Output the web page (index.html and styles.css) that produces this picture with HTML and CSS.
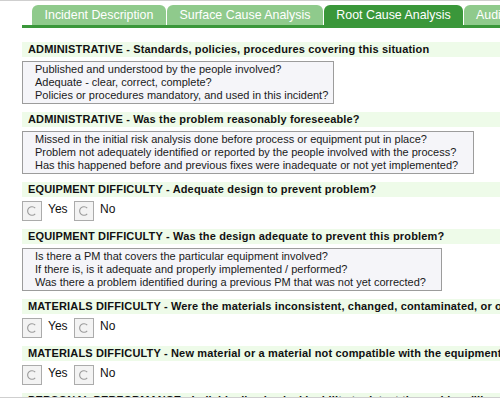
FILE: index.html
```html
<!DOCTYPE html>
<html>
<head>
<meta charset="utf-8">
<link rel="stylesheet" href="styles.css">
</head>
<body>
<div class="frame">
  <div class="tabs">
    <div class="tab tab-1">Incident Description</div>
    <div class="tab tab-2">Surface Cause Analysis</div>
    <div class="tab tab-3 active">Root Cause Analysis</div>
    <div class="tab tab-4">Audit</div>
  </div>
  <div class="bar"></div>
  <div class="content">
    <div class="q">
      <div class="qh">ADMINISTRATIVE - Standards, policies, procedures covering this situation</div>
      <div class="hint w1">Published and understood by the people involved?<br>Adequate - clear, correct, complete?<br>Policies or procedures mandatory, and used in this incident?</div>
    </div>
    <div class="q">
      <div class="qh">ADMINISTRATIVE - Was the problem reasonably foreseeable?</div>
      <div class="hint w2">Missed in the initial risk analysis done before process or equipment put in place?<br>Problem not adequately identified or reported by the people involved with the process?<br>Has this happened before and previous fixes were inadequate or not yet implemented?</div>
    </div>
    <div class="q">
      <div class="qh">EQUIPMENT DIFFICULTY - Adequate design to prevent problem?</div>
      <div class="radios">
        <label class="opt"><span class="rb"><svg width="18" height="18" viewBox="0 0 18 18"><path d="M12.2 6.2 A4.3 4.3 0 1 0 12.2 11.8" fill="none" stroke="#9a9a9a" stroke-width="1.1"/></svg></span><span class="lbl">Yes</span></label>
        <label class="opt"><span class="rb"><svg width="18" height="18" viewBox="0 0 18 18"><path d="M12.2 6.2 A4.3 4.3 0 1 0 12.2 11.8" fill="none" stroke="#9a9a9a" stroke-width="1.1"/></svg></span><span class="lbl">No</span></label>
      </div>
    </div>
    <div class="q">
      <div class="qh">EQUIPMENT DIFFICULTY - Was the design adequate to prevent this problem?</div>
      <div class="hint w3">Is there a PM that covers the particular equipment involved?<br>If there is, is it adequate and properly implemented / performed?<br>Was there a problem identified during a previous PM that was not yet corrected?</div>
    </div>
    <div class="q">
      <div class="qh">MATERIALS DIFFICULTY - Were the materials inconsistent, changed, contaminated, or otherwise defective?</div>
      <div class="radios">
        <label class="opt"><span class="rb"><svg width="18" height="18" viewBox="0 0 18 18"><path d="M12.2 6.2 A4.3 4.3 0 1 0 12.2 11.8" fill="none" stroke="#9a9a9a" stroke-width="1.1"/></svg></span><span class="lbl">Yes</span></label>
        <label class="opt"><span class="rb"><svg width="18" height="18" viewBox="0 0 18 18"><path d="M12.2 6.2 A4.3 4.3 0 1 0 12.2 11.8" fill="none" stroke="#9a9a9a" stroke-width="1.1"/></svg></span><span class="lbl">No</span></label>
      </div>
    </div>
    <div class="q">
      <div class="qh">MATERIALS DIFFICULTY - New material or a material not compatible with the equipment or process?</div>
      <div class="radios">
        <label class="opt"><span class="rb"><svg width="18" height="18" viewBox="0 0 18 18"><path d="M12.2 6.2 A4.3 4.3 0 1 0 12.2 11.8" fill="none" stroke="#9a9a9a" stroke-width="1.1"/></svg></span><span class="lbl">Yes</span></label>
        <label class="opt"><span class="rb"><svg width="18" height="18" viewBox="0 0 18 18"><path d="M12.2 6.2 A4.3 4.3 0 1 0 12.2 11.8" fill="none" stroke="#9a9a9a" stroke-width="1.1"/></svg></span><span class="lbl">No</span></label>
      </div>
    </div>
    <div class="q">
      <div class="qh">PERSONAL PERFORMANCE - Individual's physical inability to detect the problem (like color blindness)?</div>
    </div>
  </div>
</div>
</body>
</html>
```
FILE: styles.css
```css
html, body {
  margin: 0;
  padding: 0;
  background: #fff;
}
body {
  font-family: "Liberation Sans", Arial, sans-serif;
  color: #111;
  overflow: hidden;
}
.frame {
  width: 500px;
  height: 398px;
  box-sizing: border-box;
  border-top: 1px solid #cfcfcf;
  border-bottom: 1px solid #cfcfcf;
  overflow: hidden;
}
.tabs {
  display: flex;
  padding-left: 32px;
  margin-top: 4px;
  white-space: nowrap;
}
.tab {
  flex: 0 0 auto;
  height: 20px;
  line-height: 20px;
  border-radius: 6px 6px 0 0;
  background: #8fca8c;
  color: #fff;
  font-size: 12.4px;
  text-align: center;
  margin-right: 1px;
  box-sizing: border-box;
}
.tab-1 { width: 134px; }
.tab-2 { width: 156px; }
.tab-3 { width: 139px; }
.tab-4 { width: 80px; text-align: left; padding-left: 12px; }
.tab.active {
  background: #3a973a;
}
.bar {
  margin-left: 22px;
  height: 3px;
  background: #3a973a;
}
.content {
  padding-left: 22px;
  padding-top: 14px;
}
.q {
  margin-bottom: 8px;
}
.qh {
  height: 15px;
  line-height: 15px;
  padding-left: 6px;
  background: #eefbe9;
  font-size: 11px;
  font-weight: bold;
  letter-spacing: 0.16px;
  white-space: nowrap;
  margin-bottom: 4px;
  width: 600px;
}
.hint {
  box-sizing: border-box;
  border: 1px solid #9c9c9c;
  background: #f5f5f9;
  padding: 1px 0 1px 12px;
  font-size: 11px;
  line-height: 13px;
  color: #1a1a1a;
  white-space: nowrap;
}
.w1 { width: 312px; }
.w2 { width: 452px; }
.w3 { width: 420px; }
.radios {
  display: flex;
  height: 20px;
}
.opt {
  display: flex;
  align-items: flex-start;
  width: 52px;
}
.rb {
  display: block;
  width: 20px;
  height: 20px;
  box-sizing: border-box;
  border: 1px solid #ababab;
  background: #f3f3f3;
}
.rb svg {
  display: block;
}
.lbl {
  margin-left: 6px;
  font-size: 12px;
  line-height: 14px;
  margin-top: 1px;
}
```
